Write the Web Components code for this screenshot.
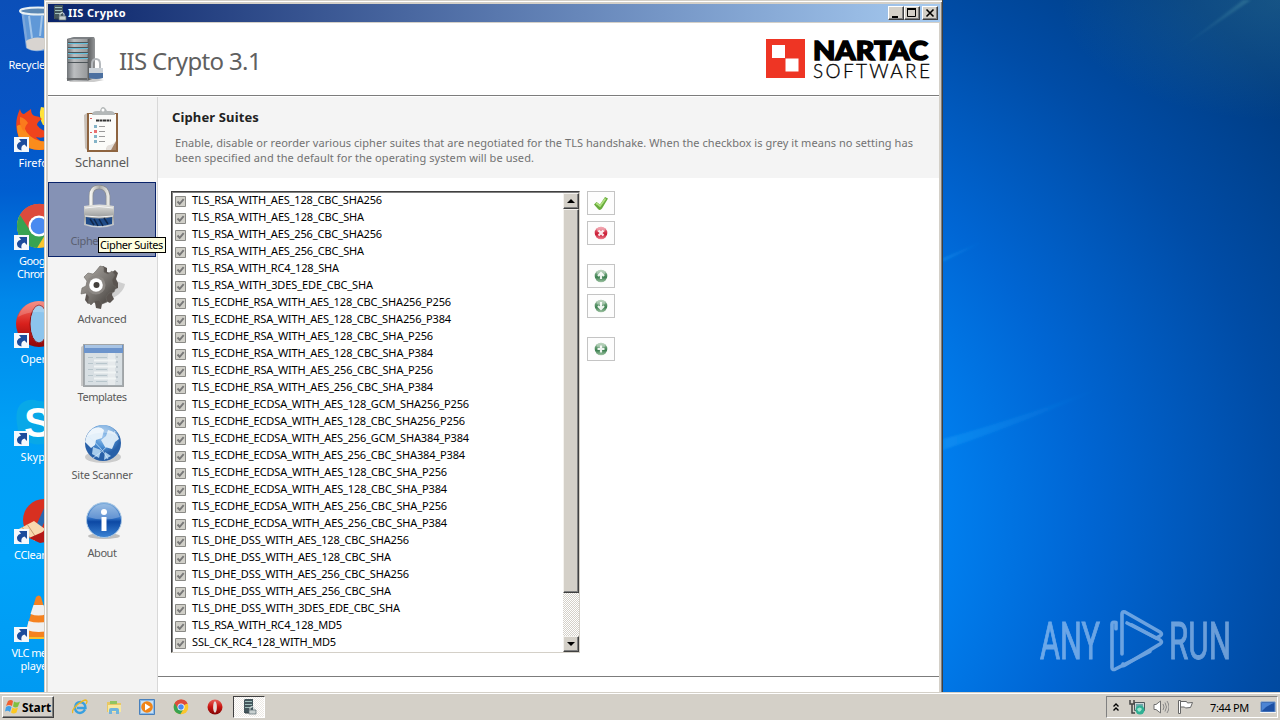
<!DOCTYPE html>
<html lang="en">
<head>
    <meta charset="UTF-8">
    <meta name="viewport" content="width=device-width, initial-scale=1.0">
    <title>IIS Crypto</title>
    <style>
        body {
            margin: 0;
            width: 1280px;
            height: 720px;
            overflow: hidden;
            font-family: "Noto Sans", "DejaVu Sans", sans-serif;
            font-size: 11px;
            line-height: 13px;
            color: #000;
        }
    </style>
</head>
<body>
    <desktop-screen>
        <desktop-icon icon="bin" plain><fit-text width="55">Recycle Bin</fit-text></desktop-icon>
        <desktop-icon icon="firefox"><fit-text width="35">Firefox</fit-text></desktop-icon>
        <desktop-icon icon="chrome"><fit-text width="34">Google</fit-text><fit-text width="38">Chrome</fit-text></desktop-icon>
        <desktop-icon icon="opera"><fit-text width="31">Opera</fit-text></desktop-icon>
        <desktop-icon icon="skype"><fit-text width="31">Skype</fit-text></desktop-icon>
        <desktop-icon icon="ccleaner"><fit-text width="44">CCleaner</fit-text></desktop-icon>
        <desktop-icon icon="vlc"><fit-text width="49">VLC media</fit-text><fit-text width="31">player</fit-text></desktop-icon>

        <app-window slot="window">
            <fit-text slot="title" width="58">IIS Crypto</fit-text>
            <app-header slot="header"></app-header>
            <side-nav slot="nav">
                <nav-item icon="clipboard" style="font-size: 13px"><fit-text width="54">Schannel</fit-text></nav-item>
                <nav-item icon="lock" active><fit-text width="63">Cipher Suites</fit-text></nav-item>
                <nav-item icon="gear"><fit-text width="49">Advanced</fit-text></nav-item>
                <nav-item icon="form"><fit-text width="49">Templates</fit-text></nav-item>
                <nav-item icon="globe"><fit-text width="61">Site Scanner</fit-text></nav-item>
                <nav-item icon="info"><fit-text width="29">About</fit-text></nav-item>
            </side-nav>
            <page-intro>
                <fit-text slot="heading" width="87">Cipher Suites</fit-text>
                <fit-text width="738">Enable, disable or reorder various cipher suites that are negotiated for the TLS handshake. When the checkbox is grey it means no setting has</fit-text>
                <fit-text width="359">been specified and the default for the operating system will be used.</fit-text>
            </page-intro>
            <cipher-panel></cipher-panel>
        </app-window>

        <tool-tip slot="overlay"><fit-text width="63">Cipher Suites</fit-text></tool-tip>
        <any-run-mark slot="overlay"></any-run-mark>
        <task-bar slot="taskbar"></task-bar>
    </desktop-screen>

    <template id="desktop-screen-template">
        <style>
            :host {
                display: flex;
                flex-direction: column;
                width: 1280px;
                height: 720px;
                position: relative;
                overflow: hidden;
            }
            .wallpaper {
                flex: 1;
                position: relative;
                overflow: hidden;
                background:
                    linear-gradient(#0b4fb8 0, #0754c4 110px, #005ed0 190px, #0088ea 300px, #00a0f5 430px, #00a2f8 560px, #009af2 100%) 0 0 / 44px 100% no-repeat,
                    radial-gradient(ellipse 780px 620px at 500px 520px, #0094ff 0, #0080f0 56%, #0066d4 75%, #004ca6 100%, #003c82 122%, #003a7c 150%);
            }
            .rays {
                position: absolute;
                left: 943px;
                top: 0;
            }
            .icons {
                display: flex;
                flex-direction: column;
                width: 72px;
                padding-top: 6px;
            }
        </style>
        <div class="wallpaper">
            <svg class="rays" width="337" height="692">
                <defs>
                    <filter id="soft"><feGaussianBlur stdDeviation="1.2"/></filter>
                    <linearGradient id="r" x1="0" x2="1"><stop offset="0" stop-color="#2ab0ff" stop-opacity=".28"/><stop offset=".8" stop-color="#2ab0ff" stop-opacity="0"/></linearGradient>
                    <linearGradient id="r2" x1="0" x2="1"><stop offset="0" stop-color="#7cc" stop-opacity="0"/><stop offset="1" stop-color="#7cc" stop-opacity=".25"/></linearGradient>
                    <radialGradient id="r3" cx="1" cy="0" r="1"><stop offset="0" stop-color="#4a8c90" stop-opacity=".3"/><stop offset="1" stop-color="#4a8c90" stop-opacity="0"/></radialGradient>
                </defs>
                <g filter="url(#soft)">
                    <path d="M0 439 Q90 415 190 374 Q90 420 0 450Z" fill="url(#r)"/>
                    <path d="M0 258 L50 237 L0 262Z" fill="url(#r)"/>
                    <path d="M235 50 L300 0 L308 0Z" fill="url(#r2)"/>
                </g>
                <path d="M117 0h220v120H117z" fill="url(#r3)"/>
            </svg>
            <div class="icons"><slot></slot></div>
            <slot name="window"></slot>
            <slot name="overlay"></slot>
        </div>
        <slot name="taskbar"></slot>
    </template>

    <template id="desktop-icon-template">
        <style>
            :host {
                display: flex;
                flex-direction: column;
                align-items: center;
                height: 98px;
                color: #fff;
            }
            .picture {
                position: relative;
                width: 48px;
                height: 48px;
                margin: 0 0 4px 6px;
            }
            .arrow {
                position: absolute;
                left: -1px;
                top: 33px;
            }
            :host([plain]) .arrow { display: none; }
        </style>
        <div class="picture">
            <app-icon size="48"></app-icon>
            <svg class="arrow" width="15" height="15" viewBox="0 0 15 15">
                <path d="M0 0h15v15H0z" fill="#f4f8fc"/>
                <path d="M5 2h8v8l-2.500-2.500q-4 1-3 6q-5-1-4.500-5.500q1-3 4-3.500z" fill="#1c4c9c"/>
            </svg>
        </div>
        <slot></slot>
    </template>

    <template id="app-window-template">
        <style>
            :host {
                position: absolute;
                left: 44px;
                top: 0;
                width: 899px;
                height: 692px;
                box-sizing: border-box;
                display: flex;
                flex-direction: column;
                background: #d4d0c8;
                border-right: 1px solid #404040;
                padding: 4px 2px 0 4px;
                box-shadow: inset 1px 1px 0 #d4d0c8, inset 2px 2px 0 #fff, inset -1px 0 0 #808080;
            }
            .bar {
                display: flex;
                align-items: center;
                height: 18px;
                padding: 0 2px 0 4px;
                color: #fff;
                font-weight: bold;
                line-height: 11px;
                background: linear-gradient(90deg, #0a246a, #a6caf0);
            }
            .bar slot { display: block; padding-bottom: 1px; }
            .caption {
                display: flex;
                margin-left: auto;
            }
            .caption svg {
                background: #d4d0c8;
                border: 1px solid;
                border-color: #fff #404040 #404040 #fff;
                box-shadow: inset -1px -1px 0 #808080;
            }
            .caption svg:last-child { margin-left: 2px; }
            .content {
                flex: 1;
                margin-right: 1px;
                border-top: 1px solid #d4d0c8;
                background: #fff;
                display: flex;
                flex-direction: column;
                min-height: 0;
            }
            .columns {
                flex: 1;
                display: flex;
                min-height: 0;
                background: #f4f4f4;
            }
            .page {
                flex: 1;
                display: flex;
                flex-direction: column;
                background: #fff;
            }
            .footer {
                height: 15px;
                margin-top: auto;
                border-top: 1px solid #7c7c7c;
            }
        </style>
        <div class="bar">
            <app-icon name="server-small" size="16"></app-icon>
            <slot name="title"></slot>
            <div class="caption">
                <svg width="14" height="12"><path d="M3 9h6v2H3z"/></svg>
                <svg width="14" height="12"><path d="M2.500 1.500h8v8h-8z" fill="none" stroke="#000"/><path d="M2 1h9v2H2z"/></svg>
                <svg width="14" height="12"><path d="M3.500 2.500l7 7m0-7l-7 7" stroke="#000" stroke-width="1.600"/></svg>
            </div>
        </div>
        <div class="content">
            <slot name="header"></slot>
            <div class="columns">
                <slot name="nav"></slot>
                <div class="page">
                    <slot></slot>
                    <div class="footer"></div>
                </div>
            </div>
        </div>
    </template>

    <template id="app-header-template">
        <style>
            :host {
                display: flex;
                align-items: center;
                justify-content: space-between;
                height: 72px;
                padding: 0 9px 0 16px;
                border-bottom: 1px solid #7c7c7c;
                margin-bottom: 1px;
            }
            .product {
                display: flex;
                align-items: center;
                font-size: 24px;
                line-height: 30px;
                color: #606060;
            }
            .product app-icon { margin-right: 7px; }
            .product fit-text { padding-top: 3px; }
            .logo { overflow: visible; }
            text { font-family: Lato, "Open Sans", sans-serif; }
        </style>
        <div class="product">
            <app-icon name="server" size="48"></app-icon>
            <fit-text width="142">IIS Crypto 3.1</fit-text>
        </div>
        <svg class="logo" width="164" height="40" viewBox="0 0 164 40">
            <path d="M0 0h39v39H0z" fill="#ee3524"/>
            <path d="M6 6h13v13H6zM19.500 19.500h13v13h-13z" fill="#fff"/>
            <text x="47" y="20.500" font-size="27" font-weight="900" textLength="115" lengthAdjust="spacingAndGlyphs" stroke="#000" stroke-width="1.500">NARTAC</text>
            <text x="47" y="38.500" font-size="19" textLength="117" font-weight="300" stroke="#000" stroke-width=".3">SOFTWARE</text>
        </svg>
    </template>

    <template id="side-nav-template">
        <style>
            :host {
                display: flex;
                flex-direction: column;
                gap: 3px;
                width: 109px;
                padding-top: 7px;
                border-right: 1px solid #d8d8d8;
                background: #f4f4f4;
            }
        </style>
        <slot></slot>
    </template>

    <template id="nav-item-template">
        <style>
            :host {
                display: flex;
                flex-direction: column;
                align-items: center;
                width: 108px;
                height: 75px;
                padding-top: 2px;
                box-sizing: border-box;
                border: 1px solid transparent;
                color: #5a5a5a;
            }
            :host([active]) {
                background: #8592b5;
                border-color: #0a246a;
                color: #5a5f70;
            }
            .label {
                height: 20px;
                display: flex;
                align-items: center;
                margin-top: -1px;
            }
            app-icon { margin-left: 1px; }
        </style>
        <app-icon size="46"></app-icon>
        <div class="label"><slot></slot></div>
    </template>

    <template id="page-intro-template">
        <style>
            :host {
                display: block;
                height: 81px;
                box-sizing: border-box;
                padding: 12px 0 0 17px;
                background: #f4f4f4;
                color: #727272;
                line-height: 15px;
            }
            .heading {
                margin: 0 0 10px -3px;
                font-size: 13px;
                line-height: 16px;
                font-weight: bold;
                color: #222;
            }
        </style>
        <div class="heading"><slot name="heading"></slot></div>
        <slot></slot>
    </template>

    <template id="cipher-panel-template">
        <style>
            :host {
                display: flex;
                gap: 7px;
                padding: 13px 0 0 13px;
            }
            .list {
                display: flex;
                width: 409px;
                height: 462px;
                box-sizing: border-box;
                border: 1px solid;
                border-color: #404040 #d4d0c8 #d4d0c8 #404040;
                box-shadow: inset 1px 1px 0 #808080;
                overflow: hidden;
            }
            .rows {
                flex: 1;
                padding: 1px 0 0 3px;
            }
            .actions {
                display: flex;
                flex-direction: column;
                gap: 6px;
            }
            .gap { margin-top: 13px; }
        </style>
        <div class="list">
            <div class="rows"></div>
            <scroll-bar></scroll-bar>
        </div>
        <div class="actions">
            <action-button icon="tick"></action-button>
            <action-button icon="cross"></action-button>
            <action-button icon="up" class="gap"></action-button>
            <action-button icon="down"></action-button>
            <action-button icon="plus" class="gap"></action-button>
        </div>
    </template>

    <template id="cipher-row-template">
        <style>
            :host {
                display: flex;
                height: 17px;
                line-height: 13px;
            }
            svg { margin: 3px 6px 0 0; }
        </style>
        <svg width="11" height="11">
            <path d="M.5.5h10v10H.5z" fill="#d0cfc8" stroke="#8a8a86"/>
            <path d="M2.500 5.500l2.200 2.400 4-4.700" fill="none" stroke="#777" stroke-width="1.900"/>
        </svg>
        <slot></slot>
    </template>

    <template id="scroll-bar-template">
        <style>
            :host {
                display: flex;
                flex-direction: column;
                width: 16px;
                margin-top: 1px;
                background: repeating-conic-gradient(#d4d0c8 0 25%, #fff 0 50%) 0 0 / 2px 2px;
            }
            .button, .thumb {
                box-sizing: border-box;
                background: #d4d0c8;
                border: 1px solid;
                border-color: #f4f2ee #404040 #404040 #f4f2ee;
                box-shadow: inset -1px -1px 0 #808080;
            }
            .button {
                display: flex;
                align-items: center;
                justify-content: center;
                height: 16px;
            }
            .thumb { height: 384px; }
            .button:last-child { margin-top: auto; }
        </style>
        <div class="button"><svg width="8" height="4"><path d="M0 4l4-4 4 4z"/></svg></div>
        <div class="thumb"></div>
        <div class="button"><svg width="8" height="4"><path d="M0 0l4 4 4-4z"/></svg></div>
    </template>

    <template id="action-button-template">
        <style>
            :host {
                display: flex;
                align-items: center;
                justify-content: center;
                width: 26px;
                height: 22px;
                border: 1px solid #c4c4c4;
                background: #fdfdfd;
            }
        </style>
        <app-icon size="16"></app-icon>
    </template>

    <template id="tool-tip-template">
        <style>
            :host {
                position: absolute;
                left: 98px;
                top: 237px;
                display: flex;
                width: 68px;
                height: 16px;
                padding-left: 1px;
                box-sizing: border-box;
                border: 1px solid #000;
                background: #ffffe1;
                line-height: 14px;
            }
        </style>
        <slot></slot>
    </template>

    <template id="any-run-mark-template">
        <style>
            :host {
                position: absolute;
                left: 1038px;
                top: 608px;
                display: block;
                opacity: .55;
            }
            svg { overflow: visible; }
            text {
                font-family: Roboto, "Open Sans", sans-serif;
                font-size: 51px;
                fill: #c4dcf8;
                stroke: #c4dcf8;
                stroke-width: 1px;
            }
        </style>
        <svg width="196" height="66" viewBox="0 0 196 66">
            <text x="2" y="51" textLength="60" lengthAdjust="spacingAndGlyphs">ANY</text>
            <text x="131" y="51" textLength="62" lengthAdjust="spacingAndGlyphs">RUN</text>
            <g fill="none" stroke="#c4dcf8" stroke-width="3.600" stroke-linejoin="round" stroke-linecap="round">
                <path d="M64 55V6q0-3 3-2l36 20q3 2 1 4l-5 2" transform="translate(0)" visibility="hidden"/>
                <path d="M84 46V6q0-3 3-2l35 20q3 2 0 4l-4 2-29-15"/>
                <path d="M78 21v-7q-4-1-4 2v46q0 3 3 2l35-19" transform="translate(0 4) scale(1 .94) translate(0 -3)"/>
                <path d="M94 17l28 15q3 2 0 4L87 57q-3 2-2-1"/>
            </g>
        </svg>
    </template>

    <template id="task-bar-template">
        <style>
            :host {
                display: flex;
                align-items: center;
                height: 28px;
                box-sizing: border-box;
                padding: 3px 2px 1px 2px;
                background: #d4d0c8;
                box-shadow: inset 0 1px 0 #d4d0c8, inset 0 2px 0 #fff;
            }
            .start {
                display: flex;
                align-items: center;
                gap: 1px;
                width: 52px;
                height: 22px;
                box-sizing: border-box;
                padding-left: 2px;
                font-size: 12px;
                font-weight: bold;
                border: 1px solid;
                border-color: #fff #404040 #404040 #fff;
                box-shadow: inset -1px -1px 0 #808080;
            }
            .quick {
                display: flex;
                gap: 17.700px;
                margin-left: 18px;
            }
            .task {
                display: flex;
                align-items: center;
                justify-content: center;
                width: 32px;
                height: 22px;
                box-sizing: border-box;
                margin-left: 10px;
                border: 1px solid;
                border-color: #404040 #fff #fff #404040;
                background: repeating-conic-gradient(#ece9e4 0 25%, #fff 0 50%) 0 0 / 2px 2px;
            }
            .task app-icon { margin-left: 3px; }
            .tray {
                display: flex;
                align-items: center;
                width: 172px;
                height: 22px;
                box-sizing: border-box;
                margin-left: auto;
                padding-left: 5px;
                border: 1px solid;
                border-color: #808080 #fff #fff #808080;
            }
            .tray app-icon { margin-right: 8px; }
            .tray fit-text { margin: 0 11px 0 9px; }
            .tray app-icon:first-child { margin-right: 9px; }
            .tray app-icon:last-child { margin-right: 0; }
        </style>
        <div class="start"><app-icon name="windows" size="16"></app-icon><fit-text width="29">Start</fit-text></div>
        <div class="quick">
            <app-icon name="ie" size="16"></app-icon>
            <app-icon name="folder" size="16"></app-icon>
            <app-icon name="player" size="16"></app-icon>
            <app-icon name="chrome" size="16"></app-icon>
            <app-icon name="opera-small" size="16"></app-icon>
        </div>
        <div class="task"><app-icon name="server-small" size="16"></app-icon></div>
        <div class="tray">
            <app-icon name="chevrons" size="8"></app-icon>
            <app-icon name="network" size="16"></app-icon>
            <app-icon name="speaker" size="16"></app-icon>
            <app-icon name="flag" size="16"></app-icon>
            <fit-text width="39">7:44 PM</fit-text>
            <app-icon name="monitor" size="16"></app-icon>
        </div>
    </template>

    <script>
        // Icon drawings, each on its own view box
        const chromeLogo = `
            <circle cx="24" cy="24" r="22" fill="#fbc62d"/>
            <path d="M24 24L5 13A22 22 0 0 1 43 13z" fill="#dd4b3c"/>
            <path d="M24 24L5 13A22 22 0 0 0 22 46L33 28z" fill="#38a352"/>
            <path d="M24 14h20a22 22 0 0 0-39-1l9 14z" fill="#dd4b3c"/>
            <circle cx="24" cy="24" r="10.500" fill="#fff"/><circle cx="24" cy="24" r="8.300" fill="#4a8af0"/>`;

        const orb = (light, dark, glyph) => `
            <defs><linearGradient id="o" x2="0" y2="1"><stop stop-color="${light}"/><stop offset=".6" stop-color="${dark}"/><stop offset="1" stop-color="${light}"/></linearGradient></defs>
            <circle cx="8" cy="8" r="6.300" fill="url(#o)"/>
            <ellipse cx="8" cy="4.500" rx="4.500" ry="2.500" fill="#fff" opacity=".35"/>
            <path d="${glyph}" fill="none" stroke="#fff" stroke-opacity=".9" stroke-width="2.200"/>`;

        const icons = {
            bin: ['0 0 48 48', `
                <path d="M6 4l5 38q9 6 23 1l7-39z" fill="#b8d4ec" opacity=".65"/>
                <path d="M9 8l4 30q8 4 18 0l4-30z" fill="#4a8cd4" opacity=".55"/>
                <path d="M11 35q8-6 22-2l-1 9q-12 5-20 0z" fill="#d8d4d0"/>
                <path d="M14 10l3 22M27 10l-2 20" stroke="#e4f2fc" stroke-width="2" opacity=".5"/>
                <ellipse cx="23" cy="5" rx="18" ry="3.500" fill="#5c88b4" stroke="#e8f0f4" stroke-width="2"/>`],
            firefox: ['0 0 48 48', `
                <path d="M26 3q17 2 20 20l-18-2q-5-9-2-18z" fill="#ffe23a"/>
                <path d="M5 5q1 5 4 5l7-5q0 6 4 7 4 0 7 3-5 3-5 6 6 8 14 6-5 9-15 6 6 8 18 4-1 9-14 9C6 45-5 26 5 5z" fill="#f0441c"/>
                <path d="M2 22Q2 45 24 46q16 0 21-16-9 9-20 7-12-3-16-14-3-4-7-1z" fill="#fb8c1c"/>
                <path d="M5 13q5 1 8 6-4 4-3 9-6-4-5-15z" fill="#fb7a1c"/>`],
            chrome: ['0 0 48 48', chromeLogo],
            opera: ['0 0 48 48', `
                <defs><linearGradient id="g" x2="0" y2="1"><stop stop-color="#f47468"/><stop offset=".5" stop-color="#d8201c"/><stop offset="1" stop-color="#8c0808"/></linearGradient></defs>
                <circle cx="24" cy="24" r="23" fill="url(#g)"/><ellipse cx="24" cy="24" rx="9" ry="19" fill="#8cc4ec" stroke="#900c0c"/>
                <path d="M3 17q18-10 42 0-6-15-21-16Q8 2 3 17z" fill="#fff" opacity=".2"/>`],
            'opera-small': ['0 0 16 16', `
                <defs><linearGradient id="g" x2="0" y2="1"><stop stop-color="#e86058"/><stop offset=".5" stop-color="#c81410"/><stop offset="1" stop-color="#800404"/></linearGradient></defs>
                <circle cx="8" cy="8" r="7.500" fill="url(#g)"/><ellipse cx="8" cy="8" rx="1.900" ry="5.800" fill="#e4dcd8"/>`],
            skype: ['0 0 48 48', `
                <path d="M14 2q5-1 9 1 19 0 22 20 2 22-18 23-15 3-24-14Q-3 5 14 2z" fill="#08a8e8"/>
                <text x="9" y="39" font-family="Liberation Sans, sans-serif" font-weight="bold" font-size="42" fill="#fff">S</text>`],
            ccleaner: ['0 0 48 48', `
                <circle cx="29" cy="24" r="21" fill="#d83020"/>
                <path d="M30 10l-9 20 5 3L38 8z" fill="#2868b0"/>
                <path d="M19 25l11 8-10 12L2 34z" fill="#f8d8b0"/><path d="M7 31l8 11M12 28l8 12" stroke="#c89870"/>
                <path d="M14 42l16-7 6 10-11 2z" fill="#b41818"/>`],
            vlc: ['0 0 48 48', `
                <path d="M6 36q2-3 6-3h27l5 11H8z" fill="#f08a18"/>
                <path d="M21 3q3-3 5 0l11 37q-13 6-27 0z" fill="#f58220"/>
                <path d="M18.500 11h10l3 9q-8 3-16 0z" fill="#f0f0f0"/>
                <path d="M13.500 27q10 3 20 0l3 9q-13 4-25 0z" fill="#f0f0f0"/><path d="M8 43h36v2H8z" fill="#f8c030"/>`],
            server: ['0 0 48 48', `
                <defs><linearGradient id="s"><stop stop-color="#707478"/><stop offset=".25" stop-color="#bcbec0"/><stop offset=".72" stop-color="#989a9c"/><stop offset=".75" stop-color="#5c5e60"/><stop offset="1" stop-color="#949698"/></linearGradient></defs>
                <path d="M2 43l14-2 24 4-10 2H6z" fill="#ccc"/>
                <path d="M3 4l7-2h20l1 2v39l-8 3H3z" fill="url(#s)"/>
                <path d="M3 4l7-2h20l-6 2z" fill="#7c8084"/>
                <path d="M4 7.500h20M4 12.500h20M4 17.500h20M4 22.500h20M4 27.500h20" stroke="#4c5458"/>
                <path d="M4 8.500h20M4 13.500h20M4 18.500h20M4 23.500h20" stroke="#62bcd8"/>
                <path d="M3 43h20v2H3z" fill="#66686a"/>
                <path d="M28 35v-6q0-5 4-5t4 5v6" fill="none" stroke="#b4b8bc" stroke-width="2"/>
                <path d="M25 33h14v10q-7 2-14 0z" fill="#ccd2d8"/><path d="M25 38h14v5q-7 2-14 0z" fill="#4c70a0"/>`],
            'server-small': ['0 0 16 16', `
                <path d="M3 0h8v14H2V1z" fill="#44565c"/>
                <path d="M3 2.500h7M3 5.500h7M3 8.500h7" stroke="#a0c0bc"/><path d="M3 14h7" stroke="#303c40"/>
                <path d="M8 11V9q2-3 4 0v2" fill="none" stroke="#ccd4d4" stroke-width="1.200"/>
                <path d="M7 11h7v4H7z" fill="#c8d0d0" stroke="#5a6a70" stroke-width=".7"/>`],
            clipboard: ['0 0 46 46', `
                <path d="M4 8l3-2v37l-2-2z" fill="#c8c0b8"/>
                <path d="M7 6h31v39H7z" fill="#8e6440"/><path d="M9 7h27v36H9z" fill="#fbfbf9"/>
                <path d="M36 34v9H26q1-4 4-4 4-1 6-5z" fill="#a4846a"/><path d="M26 43q0-5 4-5 4-1 6-4l-5 9z" fill="#e4e0dc"/>
                <path d="M12 8q0-4 5-4h3q1-4 3-4t4 4h3q5 0 5 4z" fill="#b4b8b8"/><circle cx="23" cy="3" r="1.500" fill="#fff"/>
                <path d="M16 13.500h15" stroke="#333" stroke-width="2" stroke-dasharray="3 .5"/>
                <path d="M14 18h3v3h-3zM14 28h3v3h-3zM14 33h3v3h-3z" fill="#84b4c8"/><path d="M14 23h3v3h-3z" fill="#e87070"/>
                <path d="M19 19.500h6M19 24.500h6M19 29.500h6M19 34.500h6" stroke="#999"/>
                <path d="M10 11.500h2M10 25.500h2" stroke="#e06060"/>`],
            lock: ['0 0 46 46', `
                <defs>
                    <linearGradient id="b" x2="0" y2="1"><stop stop-color="#e4e4e0"/><stop offset=".55" stop-color="#9a9c9c"/><stop offset="1" stop-color="#d0d4d8"/></linearGradient>
                    <linearGradient id="k"><stop stop-color="#f4f4f0"/><stop offset=".5" stop-color="#a8a8a4"/><stop offset="1" stop-color="#e8e8e4"/></linearGradient>
                </defs>
                <path d="M11 23V11Q11 2 19 2t9 9v12" fill="none" stroke="#888c90" stroke-width="4.500"/>
                <path d="M11 23V11Q11 2 19 2t9 9v12" fill="none" stroke="url(#k)" stroke-width="3.200"/>
                <path d="M4 21q16-3 30 0v19q-14 5-30 0z" fill="url(#b)"/>
                <path d="M6 32q14 3 26 0v7q-13 4-26 0z" fill="#204c88"/>
                <path d="M10 34l4 6m0-6l4 7m1-7l4 7m1-8l4 6" stroke="#10284c" stroke-width="1.500"/>
                <path d="M5 23q14-3 28 0M5 31q14 2 28 0" stroke="#f4f4f4" fill="none"/>`],
            gear: ['0 0 46 46', `
                <defs><linearGradient id="m" x2="1" y2="1"><stop stop-color="#b4b0aa"/><stop offset=".5" stop-color="#7c7874"/><stop offset="1" stop-color="#3c3834"/></linearGradient></defs>
                <path d="M27 37q16-5 18-16l-9-3-8 22z" fill="#aaa" opacity=".5"/>
                <g transform="translate(0 1)">
                    <path d="M19 7l4-5 4 2v4l4 1 4-3 3 3-2 6 2 4v5l-5 2-1 5 2 4-4 4-4-2-4 3-1 5-5-1-1-5-3-2-4 3-3-4 1-5 2-4-2-5 5-5 5-2z" fill="#5a5450"/>
                    <path d="M16 7l4-5 4 1v5l4 2 4-3 3 4-3 5 1 5 3 2-2 5-5 1-3 4 1 5-5 2-3-4-4 1-4 4-3-3 1-5-3-4-5 1 1-6 4-2 1-5-3-4 4-4 5 1z" fill="url(#m)" stroke="#6a6662" stroke-width=".6"/>
                    <circle cx="16" cy="21" r="9.500" fill="#8c8884"/><circle cx="16" cy="21" r="6.800" fill="#fff"/><circle cx="16.500" cy="21" r="3" fill="#44403c"/>
                </g>`],
            form: ['0 0 46 46', `
                <path d="M1 6l3-2v41H1z" fill="#c8c8c8"/>
                <path d="M3 3h41v43H3z" fill="#a4aaae"/><path d="M4 4h39v8H4z" fill="#6c94cc"/><path d="M5 4h37v3H5z" fill="#a8c4e4"/>
                <path d="M5 12h37v32H5z" fill="#d8dfe3"/><path d="M28 12h7v32h-7z" fill="#e6eaec"/>
                <path d="M8 16.500h5M16 16.500h11M8 22.500h5M16 22.500h11M8 28.500h5M16 28.500h11M8 34.500h5M16 34.500h11M8 40.500h5M16 40.500h11" stroke="#b8c6cc"/>
                <path d="M14 19.500h22M14 25.500h22M14 31.500h22M14 37.500h22" stroke="#f0f4f4" stroke-width="2"/>
                <path d="M37 15v26" stroke="#a8b4bc" stroke-dasharray="2 3"/><path d="M3.500 3.500h40v42h-40z" fill="none" stroke="#a0a4a6"/>`],
            globe: ['0 0 46 46', `
                <defs><radialGradient id="w" cx=".5" cy=".3"><stop stop-color="#9cc4ec"/><stop offset=".6" stop-color="#4c90d4"/><stop offset="1" stop-color="#2860a8"/></radialGradient></defs>
                <ellipse cx="23" cy="38" rx="18" ry="6" fill="#bbb" opacity=".7"/>
                <circle cx="23" cy="24" r="18" fill="url(#w)"/>
                <path d="M12 10q8-4 12 1l-2 8-6 2-1 5-4 3-4-4-2-2q1-8 7-13z" fill="#e4f0fa"/>
                <path d="M28 11q9 2 11 9l-4 3-3 7-7-2-4-7 5-4z" fill="#d8e8f6"/>
                <path d="M13 28l8 3-2 8-7-4zM25 33l6 4-7 4z" fill="#a8ccec"/>
                <path d="M8 17q14 12 20 23M35 12q-4 16-22 27" stroke="#d8ecfc" fill="none" opacity=".7"/>
                <path d="M7 17Q13 6 23 6t16 11q-16-7-32 0z" fill="#fff" opacity=".35"/>`],
            info: ['0 0 46 46', `
                <defs><linearGradient id="i" x2="0" y2="1"><stop stop-color="#7cacdc"/><stop offset=".45" stop-color="#3070c4"/><stop offset=".55" stop-color="#0c48a4"/><stop offset="1" stop-color="#3c84d4"/></linearGradient></defs>
                <ellipse cx="24" cy="39" rx="16" ry="3" fill="#999" opacity=".6"/>
                <circle cx="24" cy="23" r="17.500" fill="url(#i)" stroke="#aac8e4"/>
                <path d="M8 20Q12 7 24 7t16 13q-16 5-32 0z" fill="#fff" opacity=".25"/>
                <circle cx="24" cy="15" r="3" fill="#fff"/><path d="M21.500 20h5v14h-5z" fill="#fff"/>`],
            tick: ['0 0 16 16', `
                <path d="M1 9.500l2.500-2.500 3.500 2.500L12 2l3 1.500-6 10q-2 2.500-4 .5z" fill="#68ac3c"/><path d="M3 9l1-.5 3 2.500 5.500-7.500" fill="none" stroke="#b0e080" stroke-width="1.800"/>`],
            cross: ['0 0 16 16', orb('#f08090', '#c81c34', 'M5.500 5.500l5 5m0-5l-5 5')],
            up: ['0 0 16 16', orb('#a0c4a4', '#3c8050', 'M8 11V6M5 8l3-3 3 3')],
            down: ['0 0 16 16', orb('#a0c4a4', '#3c8050', 'M8 4v6M5 8l3 3 3-3')],
            plus: ['0 0 16 16', orb('#a0c4a4', '#3c8050', 'M8 4.500v7M4.500 8h7')],
            windows: ['0 0 16 16', `
                <path d="M3 2q3-2 5 0L7 7Q4 5 1 7z" fill="#f06030"/><path d="M9 2.500q3 2 6 0l-2 5q-2 2-5 0z" fill="#80c040"/>
                <path d="M1 8q3-2 5.500 0L5 13q-2-2-5-.5z" fill="#40a0e8"/><path d="M7.500 8.500q2 2 5.500 0L11.500 13.500q-3 2-5.500 0z" fill="#fcc820"/>`],
            ie: ['0 0 16 16', `
                <path d="M13 10.500Q11 14 8 14q-5-.5-5-5.500Q3.500 3 8.500 3q5 1 5 6H5" fill="none" stroke="#38a0e0" stroke-width="2.400"/>
                <path d="M1 14Q-1 12 5 6q6-5 9-5 2 1 0 4" fill="none" stroke="#ecb820" stroke-width="1.300"/>`],
            folder: ['0 0 16 16', `
                <path d="M1 3h6l1 1h7v9H1z" fill="#e8c864"/><path d="M2 6h13v7H2z" fill="#f8e8a0"/>
                <path d="M4 2h7v3H4z" fill="#90c460"/><path d="M3 15v-4q0-2 2-2h6q2 0 2 2v4h-3v-3H6v3z" fill="#70b4dc"/>`],
            player: ['0 0 16 16', `
                <path d="M.5.5h15v15H.5z" fill="#88b8e8" stroke="#4880bc"/><path d="M2 2h12v12H2z" fill="#c8e0f4"/>
                <circle cx="8" cy="8" r="5.800" fill="#f08418"/><path d="M6 4.500l5.500 3.500L6 11.500z" fill="#fff"/>`],
            chevrons: ['0 0 8 8', `<path d="M1.500 3.500L4 1l2.500 2.500M1.500 7.500L4 5l2.500 2.500" fill="none" stroke="#000" stroke-width="1.400"/>`],
            network: ['0 0 16 16', `
                <path d="M5.500 3.500h10v8h-10z" fill="#cdd8d8" stroke="#50585c"/><path d="M7 5h7v5H7z" fill="#70a8ac"/>
                <circle cx="11" cy="11" r="4.500" fill="#30b094"/><path d="M8 10q3-3 5 0-2 4-4 2z" fill="#a0e4d0"/>
                <path d="M1 1v4h4V1M3 5v9h3" fill="none" stroke="#444" stroke-width="1.500"/>`],
            speaker: ['0 0 16 16', `
                <path d="M1 5.500h2L7.500 2v12L3 10.500H1z" fill="#fff" stroke="#707070"/>
                <path d="M10 5q2 3 0 6M12 3.500q3 4.500 0 9M14 2q4 6 0 12" fill="none" stroke="#888"/>`],
            flag: ['0 0 16 16', `
                <path d="M1.500 1.500h2v13h-2z" fill="#fff" stroke="#666"/><path d="M3.500 2.500h6l1 1.500 5-.5-2 5-5 .5-1-1h-4z" fill="#fff" stroke="#666"/>`],
            monitor: ['0 0 16 16', `
                <path d="M1 3h14v10H1z" fill="#1c50a4" stroke="#6490cc"/><path d="M2 4h12Q7 6 2 12z" fill="#4c84d4"/><path d="M0 13.500h16" stroke="#f4f4f4"/>`]
        };

        // Suite name and the width of its label
        const suites = [
            ['TLS_RSA_WITH_AES_128_CBC_SHA256', 190],
            ['TLS_RSA_WITH_AES_128_CBC_SHA', 172],
            ['TLS_RSA_WITH_AES_256_CBC_SHA256', 190],
            ['TLS_RSA_WITH_AES_256_CBC_SHA', 172],
            ['TLS_RSA_WITH_RC4_128_SHA', 147],
            ['TLS_RSA_WITH_3DES_EDE_CBC_SHA', 181],
            ['TLS_ECDHE_RSA_WITH_AES_128_CBC_SHA256_P256', 259],
            ['TLS_ECDHE_RSA_WITH_AES_128_CBC_SHA256_P384', 259],
            ['TLS_ECDHE_RSA_WITH_AES_128_CBC_SHA_P256', 241],
            ['TLS_ECDHE_RSA_WITH_AES_128_CBC_SHA_P384', 241],
            ['TLS_ECDHE_RSA_WITH_AES_256_CBC_SHA_P256', 241],
            ['TLS_ECDHE_RSA_WITH_AES_256_CBC_SHA_P384', 241],
            ['TLS_ECDHE_ECDSA_WITH_AES_128_GCM_SHA256_P256', 277],
            ['TLS_ECDHE_ECDSA_WITH_AES_128_CBC_SHA256_P256', 273],
            ['TLS_ECDHE_ECDSA_WITH_AES_256_GCM_SHA384_P384', 277],
            ['TLS_ECDHE_ECDSA_WITH_AES_256_CBC_SHA384_P384', 273],
            ['TLS_ECDHE_ECDSA_WITH_AES_128_CBC_SHA_P256', 255],
            ['TLS_ECDHE_ECDSA_WITH_AES_128_CBC_SHA_P384', 255],
            ['TLS_ECDHE_ECDSA_WITH_AES_256_CBC_SHA_P256', 255],
            ['TLS_ECDHE_ECDSA_WITH_AES_256_CBC_SHA_P384', 255],
            ['TLS_DHE_DSS_WITH_AES_128_CBC_SHA256', 217],
            ['TLS_DHE_DSS_WITH_AES_128_CBC_SHA', 199],
            ['TLS_DHE_DSS_WITH_AES_256_CBC_SHA256', 217],
            ['TLS_DHE_DSS_WITH_AES_256_CBC_SHA', 199],
            ['TLS_DHE_DSS_WITH_3DES_EDE_CBC_SHA', 208],
            ['TLS_RSA_WITH_RC4_128_MD5', 150],
            ['SSL_CK_RC4_128_WITH_MD5', 144]
        ];

        // Clones the template named after the element into its shadow root
        class TemplateElement extends HTMLElement {
            constructor() {
                super();
                const template = document.getElementById(`${this.localName}-template`);
                this.attachShadow({ mode: 'open' }).appendChild(template.content.cloneNode(true));
            }

            connectedCallback() {
                const icon = this.getAttribute('icon');
                if (icon) {
                    this.shadowRoot.querySelector('app-icon').setAttribute('name', icon);
                }
            }
        }

        class CipherPanel extends TemplateElement {
            connectedCallback() {
                const rows = this.shadowRoot.querySelector('.rows');
                suites.forEach(([name, width]) => {
                    const row = document.createElement('cipher-row');
                    row.innerHTML = `<fit-text width="${width}">${name}</fit-text>`;
                    rows.appendChild(row);
                });
            }
        }

        class AppIcon extends HTMLElement {
            static get observedAttributes() {
                return ['name'];
            }

            constructor() {
                super();
                this.attachShadow({ mode: 'open' });
            }

            attributeChangedCallback() {
                const [viewBox, body] = icons[this.getAttribute('name')];
                const size = this.getAttribute('size');
                this.shadowRoot.innerHTML = `
                    <style>:host { display: block; flex: none; } svg { display: block; }</style>
                    <svg width="${size}" height="${size}" viewBox="${viewBox}">${body}</svg>`;
            }
        }

        // One line of text, tracked so that it fills the given width
        class FitText extends HTMLElement {
            constructor() {
                super();
                this.attachShadow({ mode: 'open' }).innerHTML = `
                    <style>
                        :host { display: block; flex: none; white-space: nowrap; }
                        span { display: inline-block; }
                    </style>
                    <span><slot></slot></span>`;
            }

            connectedCallback() {
                const width = Number(this.getAttribute('width'));
                const span = this.shadowRoot.querySelector('span');
                const natural = span.getBoundingClientRect().width;
                span.style.letterSpacing = `${(width - natural) / this.textContent.length}px`;
                this.style.width = `${width}px`;
            }
        }

        ['desktop-screen', 'desktop-icon', 'app-window', 'app-header', 'side-nav', 'nav-item', 'page-intro',
            'cipher-row', 'scroll-bar', 'action-button', 'tool-tip', 'any-run-mark', 'task-bar'
        ].forEach(name => customElements.define(name, class extends TemplateElement {}));
        customElements.define('cipher-panel', CipherPanel);
        customElements.define('app-icon', AppIcon);
        // Last, since it measures itself in the finished layout
        customElements.define('fit-text', FitText);
    </script>
</body>
</html>
